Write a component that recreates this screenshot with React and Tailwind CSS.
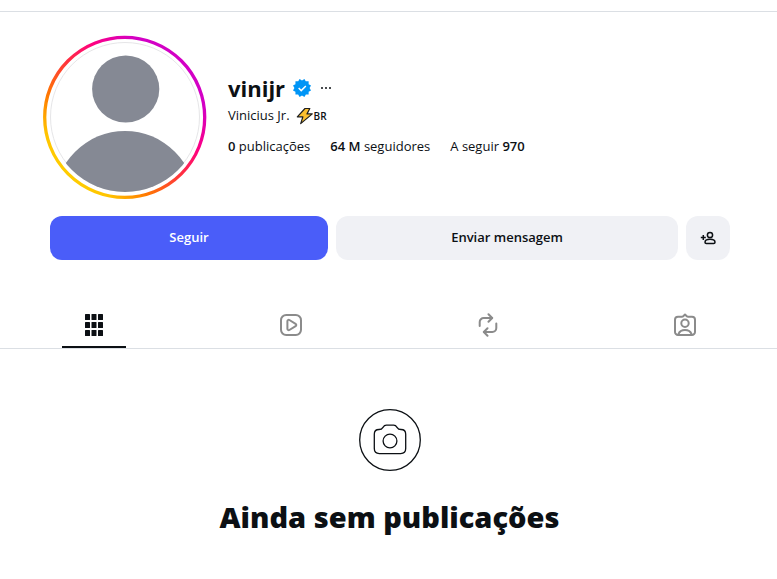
const tabs = [
  { label: 'Publicações', Icon: GridIcon, active: true },
  { label: 'Reels', Icon: ReelsIcon },
  { label: 'Repostagens', Icon: RepostIcon },
  { label: 'Identificações', Icon: TaggedIcon },
];

function Avatar() {
  return (
    <svg viewBox="0 0 164 164" className="-m-[7px] h-[164px] w-[164px] shrink-0" role="img" aria-label="Foto de perfil de vinijr">
      <defs>
        <linearGradient id="ring" x1="0.146" y1="0.854" x2="0.854" y2="0.146">
          <stop offset="0" stopColor="#ffcc00" />
          <stop offset="0.08" stopColor="#ffc400" />
          <stop offset="0.25" stopColor="#ff7a00" />
          <stop offset="0.5" stopColor="#ff3040" />
          <stop offset="0.68" stopColor="#ff0080" />
          <stop offset="0.9" stopColor="#d300c5" />
        </linearGradient>
        <clipPath id="face">
          <circle cx="82" cy="82" r="75" />
        </clipPath>
      </defs>
      <circle cx="81.7" cy="82.3" r="80" fill="none" stroke="url(#ring)" strokeWidth="3.3" />
      <circle cx="82" cy="82" r="74.5" fill="#fff" stroke="#e6e6e8" />
      <g clipPath="url(#face)" fill="#858994">
        <circle cx="82.7" cy="54" r="33.6" />
        <circle cx="82" cy="166.5" r="70.5" />
      </g>
    </svg>
  );
}

function VerifiedIcon() {
  return (
    <svg viewBox="0 0 40 40" className="h-[18px] w-[18px]" role="img" aria-label="Verificado">
      <path
        d="M19.998 3.094 14.638 0l-2.972 5.15H5.432v6.354L0 14.64 3.094 20 0 25.359l5.432 3.137v5.905h5.975L14.638 40l5.36-3.094L25.358 40l3.232-5.6h6.162v-6.01L40 25.359 36.905 20 40 14.641l-5.248-3.03v-6.46h-6.419L25.358 0l-5.36 3.094Zm7.415 11.225 2.254 2.287-11.43 11.5-6.835-6.93 2.244-2.258 4.587 4.581 9.18-9.18Z"
        fill="#0095f6"
        fillRule="evenodd"
      />
    </svg>
  );
}

function BoltIcon() {
  return (
    <svg viewBox="0 0 18 18" className="h-[18px] w-[18px]" fill="#fdc02f" stroke="#1f1f1f" strokeWidth="1.2" strokeLinejoin="round">
      <path d="M9 1.5 1.3 9.8h5.6L4.7 16.6 16.3 6.9H11l2.8-5.4z" />
    </svg>
  );
}

function AddUserIcon() {
  return (
    <svg viewBox="0 0 16 16" className="h-4 w-4" fill="none" stroke="#0c1014" strokeWidth="1.5">
      <circle cx="10" cy="5" r="2.6" />
      <path d="M5 12.3c0-2 2.2-3 5-3s5 1 5 3c0 .8-.5 1.2-1.3 1.2H6.3c-.8 0-1.3-.4-1.3-1.2z" />
      <path d="M.8 7.5h5M3.3 5v5" />
    </svg>
  );
}

function GridIcon() {
  return (
    <svg viewBox="0 0 24 24" className="h-6 w-6" fill="#0c1014">
      {[1, 9, 17].map((y) =>
        [3, 9.5, 16].map((x) => <rect key={`${x}-${y}`} x={x} y={y} width="5" height="6" rx="0.5" />)
      )}
    </svg>
  );
}

function ReelsIcon() {
  return (
    <svg viewBox="0 0 24 24" className="h-6 w-6" fill="none" stroke="#8b8b8b" strokeWidth="2" strokeLinejoin="round">
      <rect x="2" y="2" width="20" height="20" rx="5.2" />
      <path d="M8.4 8.2v7.6c0 1.1 1.1 1.7 2 1.2l6.2-3.8c.9-.5.9-1.8 0-2.3L10.4 7c-.9-.5-2 .1-2 1.2z" />
    </svg>
  );
}

function RepostIcon() {
  return (
    <svg viewBox="0 0 24 24" className="h-6 w-6" fill="none" stroke="#8b8b8b" strokeWidth="2" strokeLinecap="round" strokeLinejoin="round">
      <path d="M3.7 13V9a4 4 0 0 1 4-4H16" />
      <path d="M12.500 1.300 16.200 5l-3.700 3.700" />
      <path d="M20.300 10.500v4.500a4 4 0 0 1-4 4H8" />
      <path d="M11.500 15.300 7.800 19l3.700 3.700" />
    </svg>
  );
}

function TaggedIcon() {
  return (
    <svg viewBox="0 0 24 24" className="h-6 w-6" fill="none" stroke="#8b8b8b" strokeWidth="2" strokeLinecap="round" strokeLinejoin="round">
      <path d="M10.2 3.2 12 1.5l1.8 1.7c.4.4.8.5 1.3.5H19a3 3 0 0 1 3 3V18.900a3 3 0 0 1-3 3H5a3 3 0 0 1-3-3V6.700a3 3 0 0 1 3-3h3.900c.5 0 .9-.1 1.300-.5z" />
      <circle cx="12" cy="10.300" r="3.700" />
      <path d="M5.500 21c1-2.700 3.600-4 6.500-4s5.500 1.300 6.500 4" />
    </svg>
  );
}

function CameraIcon() {
  return (
    <svg viewBox="0 0 62 62" className="h-[62px] w-[62px]" fill="none" stroke="#0c1014" strokeWidth="1.3">
      <circle cx="31" cy="31" r="30.3" />
      <circle cx="31" cy="32" r="6.9" />
      <path d="M20 20.500c2.500 0 3-.6 4-2.200.9-1.500 1.700-2.100 3.400-2.100h7.200c1.700 0 2.500.6 3.400 2.100 1 1.600 1.500 2.200 4 2.200 3 0 4.700 1.900 4.700 4.700v14.400c0 3.300-2 5-5 5H20.300c-3 0-5-1.700-5-5V25.200c0-2.800 1.700-4.700 4.700-4.700z" />
    </svg>
  );
}

export default function App() {
  return (
    <div className="min-h-screen bg-white pt-[11px] font-['Open_Sans','Noto_Sans',sans-serif] text-[13px] text-[#0c1014]">
      <main className="border-t border-[#dbdfe4] pt-[30px]">
        <div className="pr-[47px] pl-[50px]">
          <header className="flex gap-7">
            <Avatar />
            <section className="flex flex-col pt-8">
              <div className="flex h-7 items-center">
                <h1 className="mr-2 text-[22px] leading-7 font-bold">vinijr</h1>
                <VerifiedIcon />
                <button type="button" aria-label="Opções" className="ml-2 flex gap-0.5 p-0.5">
                  {[0, 1, 2].map((i) => (
                    <span key={i} className="h-0.5 w-0.5 rounded-full bg-[#0c1014]" />
                  ))}
                </button>
              </div>
              <p className="mt-1 flex h-5 items-center">
                Vinicius Jr.
                <span className="ml-1.5"><BoltIcon /></span>
                <span className="text-[10px] font-semibold">BR</span>
              </p>
              <ul className="mt-2.5 flex gap-5 leading-5 whitespace-nowrap">
                <li><span className="font-semibold">0</span> publicações</li>
                <li><a href="#seguidores"><span className="font-semibold">64 M</span> seguidores</a></li>
                <li><a href="#seguindo">A seguir <span className="font-semibold">970</span></a></li>
              </ul>
            </section>
          </header>

          <div className="mt-6 flex gap-2 font-semibold">
            <button type="button" className="h-11 flex-[278] rounded-xl bg-[#4a5df9] text-white">Seguir</button>
            <button type="button" className="h-11 flex-[342] rounded-xl bg-[#f0f1f5]">Enviar mensagem</button>
            <button type="button" aria-label="Contas semelhantes" className="grid h-11 w-11 place-items-center rounded-xl bg-[#f0f1f5]">
              <AddUserIcon />
            </button>
          </div>
        </div>

        <nav className="mt-10 flex h-[49px] justify-between border-b border-[#dbdfe4] pr-[60px] pl-[62px]">
          {tabs.map(({ label, Icon, active }) => (
            <a
              key={label}
              href="#tab"
              aria-label={label}
              className={`flex w-16 justify-center border-b-2 pt-[13px] ${active ? 'border-[#0c1014]' : 'border-transparent'}`}
            >
              <Icon />
            </a>
          ))}
        </nav>

        <section className="flex flex-col items-center pt-[60px] pl-0.5">
          <CameraIcon />
          <h2 className="mt-7 text-center text-[29px] leading-9 font-extrabold">Ainda sem publicações</h2>
        </section>
      </main>
    </div>
  );
}
